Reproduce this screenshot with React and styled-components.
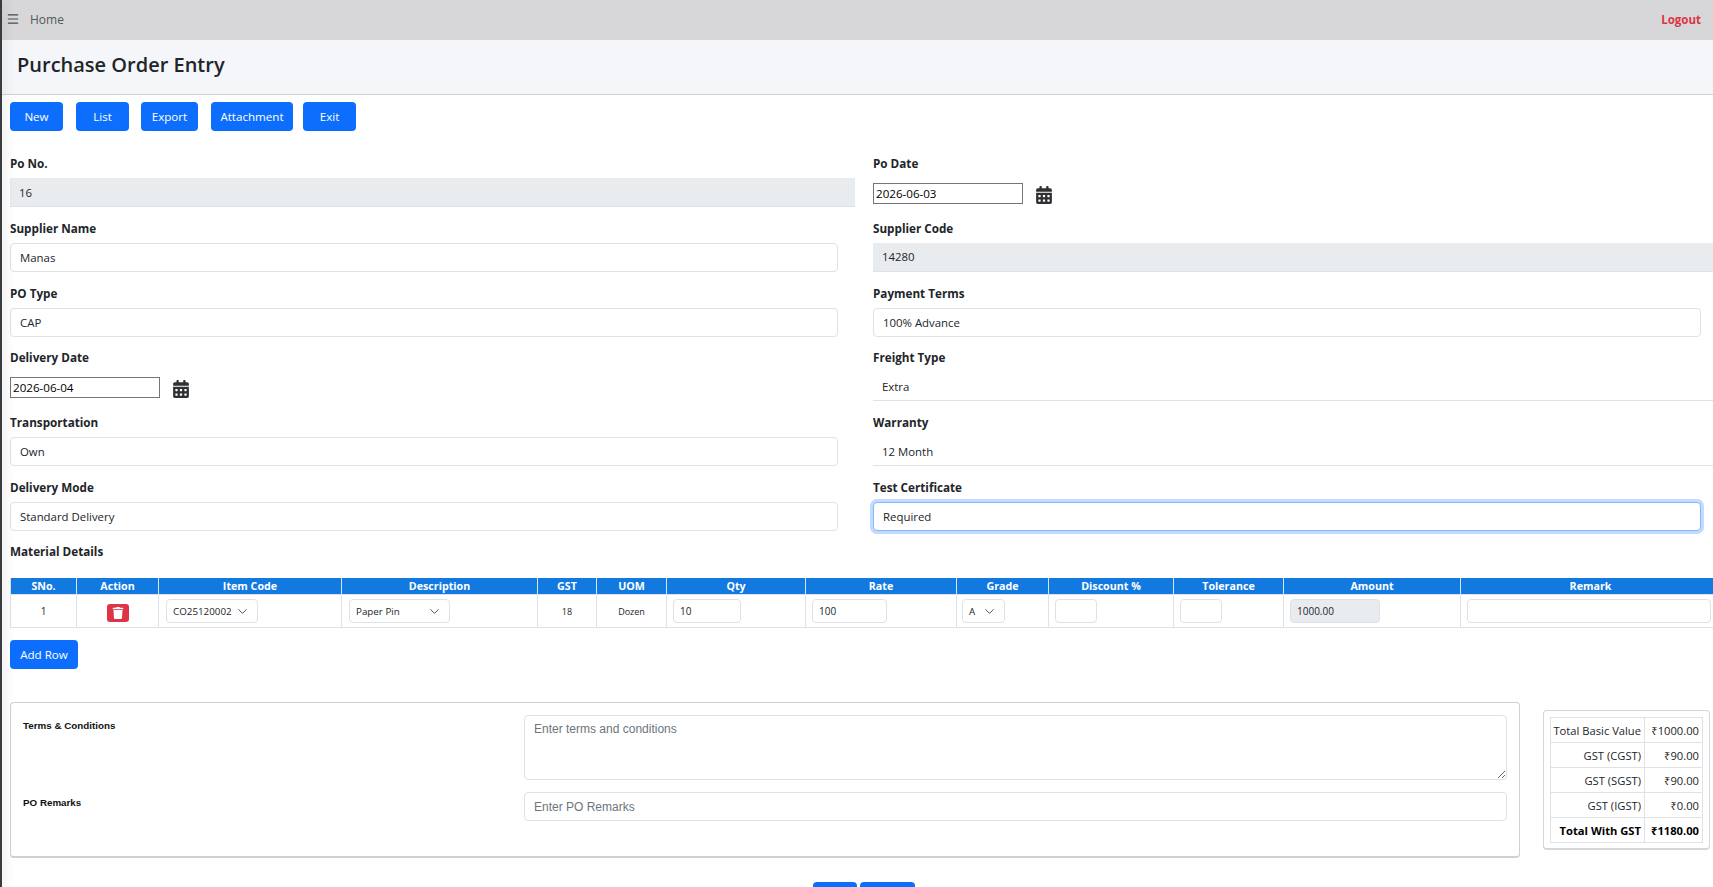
import React from 'react'
import styled, { createGlobalStyle } from 'styled-components'
import { Menu, ChevronDown } from 'lucide-react'
import { FaCalendarAlt, FaTrash } from 'react-icons/fa'

const sans = '"Open Sans", "Noto Sans", Arial, sans-serif'
const arial = '"Liberation Sans", Arial, sans-serif'

const GlobalStyle = createGlobalStyle`
  html, body {
    margin: 0;
    height: 887px;
    overflow: hidden;
    background: #fff;
  }
  * { box-sizing: border-box; }
`

const columns = [
  { title: 'SNo.', width: 66 },
  { title: 'Action', width: 82 },
  { title: 'Item Code', width: 183 },
  { title: 'Description', width: 196 },
  { title: 'GST', width: 59 },
  { title: 'UOM', width: 70 },
  { title: 'Qty', width: 139 },
  { title: 'Rate', width: 151 },
  { title: 'Grade', width: 92 },
  { title: 'Discount %', width: 125 },
  { title: 'Tolerance', width: 110 },
  { title: 'Amount', width: 177 },
  { title: 'Remark', width: 260 },
]

const totals = [
  { label: 'Total Basic Value', value: '₹1000.00' },
  { label: 'GST (CGST)', value: '₹90.00' },
  { label: 'GST (SGST)', value: '₹90.00' },
  { label: 'GST (IGST)', value: '₹0.00' },
  { label: 'Total With GST', value: '₹1180.00', strong: true },
]

const App = () => {
  return (
    <Page>
      <GlobalStyle />
      <SideEdge />
      <TopBar>
        <MenuButton><Menu size={14} strokeWidth={2} /></MenuButton>
        <HomeLink>Home</HomeLink>
        <Logout>Logout</Logout>
      </TopBar>
      <TitleBar>
        <Title>Purchase Order Entry</Title>
      </TitleBar>

      <Toolbar>
        <Button $width={53} $after={13}>New</Button>
        <Button $width={53} $after={12}>List</Button>
        <Button $width={57} $after={13}>Export</Button>
        <Button $width={82} $after={10}>Attachment</Button>
        <Button $width={53}>Exit</Button>
      </Toolbar>

      <FormGrid>
        <Field>
          <Label>Po No.</Label>
          <ReadOnlyInput readOnly value="16" />
        </Field>
        <Field>
          <Label>Po Date</Label>
          <DateRow>
            <DateInput readOnly value="2026-06-03" />
            <CalendarIcon><FaCalendarAlt /></CalendarIcon>
          </DateRow>
        </Field>

        <Field>
          <Label>Supplier Name</Label>
          <TextInput readOnly value="Manas" />
        </Field>
        <Field>
          <Label>Supplier Code</Label>
          <ReadOnlyInput readOnly value="14280" />
        </Field>

        <Field>
          <Label>PO Type</Label>
          <TextInput readOnly value="CAP" />
        </Field>
        <Field>
          <Label>Payment Terms</Label>
          <TextInput readOnly value="100% Advance" />
        </Field>

        <Field>
          <Label>Delivery Date</Label>
          <DateRow>
            <DateInput readOnly value="2026-06-04" />
            <CalendarIcon><FaCalendarAlt /></CalendarIcon>
          </DateRow>
        </Field>
        <Field>
          <Label>Freight Type</Label>
          <LineInput readOnly value="Extra" />
        </Field>

        <Field>
          <Label>Transportation</Label>
          <TextInput readOnly value="Own" />
        </Field>
        <Field>
          <Label>Warranty</Label>
          <LineInput readOnly value="12 Month" />
        </Field>

        <Field>
          <Label>Delivery Mode</Label>
          <TextInput readOnly value="Standard Delivery" />
        </Field>
        <Field>
          <Label>Test Certificate</Label>
          <TextInput $focused readOnly value="Required" />
        </Field>
      </FormGrid>

      <SectionTitle>Material Details</SectionTitle>

      <TableWrap>
        <MaterialTable>
          <colgroup>
            {columns.map(c => <col key={c.title} style={{ width: c.width }} />)}
          </colgroup>
          <thead>
            <tr>
              {columns.map(c => <HeadCell key={c.title}>{c.title}</HeadCell>)}
            </tr>
          </thead>
          <tbody>
            <tr>
              <Cell $center $big>1</Cell>
              <Cell $center>
                <DeleteButton><FaTrash /></DeleteButton>
              </Cell>
              <Cell>
                <SelectBox $width={92} $shift={1}>CO25120002<ChevronDown size={15} strokeWidth={1.5} /></SelectBox>
              </Cell>
              <Cell>
                <SelectBox $width={101} $shift={1}>Paper Pin<ChevronDown size={15} strokeWidth={1.5} /></SelectBox>
              </Cell>
              <Cell $center>18</Cell>
              <Cell $center>Dozen</Cell>
              <Cell><CellInput $width={68} readOnly value="10" /></Cell>
              <Cell><CellInput $width={75} readOnly value="100" /></Cell>
              <Cell>
                <SelectBox $width={43} $shift={-1}>A<ChevronDown size={15} strokeWidth={1.5} /></SelectBox>
              </Cell>
              <Cell><CellInput $width={42} readOnly value="" /></Cell>
              <Cell><CellInput $width={42} readOnly value="" /></Cell>
              <Cell><CellInput $width={90} $disabled readOnly value="1000.00" /></Cell>
              <Cell><CellInput $width={244} readOnly value="" /></Cell>
            </tr>
          </tbody>
        </MaterialTable>
      </TableWrap>

      <AddRow>Add Row</AddRow>

      <BottomSection>
        <TermsCard>
          <TermsRow>
            <TermsLabel>Terms &amp; Conditions</TermsLabel>
            <TermsArea placeholder="Enter terms and conditions" />
          </TermsRow>
          <TermsRow>
            <TermsLabel>PO Remarks</TermsLabel>
            <TermsInput placeholder="Enter PO Remarks" />
          </TermsRow>
        </TermsCard>
        <SummaryCard>
          <SummaryTable>
            <colgroup>
              <col style={{ width: 94 }} />
              <col />
            </colgroup>
            <tbody>
              {totals.map(t => (
                <tr key={t.label}>
                  <SummaryCell $strong={t.strong}>{t.label}</SummaryCell>
                  <SummaryCell $strong={t.strong}>{t.value}</SummaryCell>
                </tr>
              ))}
            </tbody>
          </SummaryTable>
        </SummaryCard>
      </BottomSection>

      <Footer>
        <Button $width={44} $after={3}>Save</Button>
        <Button $width={55}>Cancel</Button>
      </Footer>
    </Page>
  )
}

export default App

const Page = styled.div`
  position: relative;
  width: 1713px;
  height: 887px;
  overflow: hidden;
  font-family: ${sans};
  color: #212529;
  background: #fff;
`
const SideEdge = styled.div`
  position: absolute;
  left: 0;
  top: 0;
  bottom: 0;
  width: 2px;
  background: #3a3b3f;
  box-shadow: 2px 0 10px rgba(0, 0, 0, 0.22);
  z-index: 2;
`
const TopBar = styled.div`
  display: flex;
  align-items: center;
  height: 40px;
  padding: 0 12px 2px 6px;
  background: #d7d7d9;
  font-size: 12px;
`
const MenuButton = styled.span`
  display: flex;
  color: #4a4a4d;
`
const HomeLink = styled.span`
  margin-left: 10px;
  color: #55585c;
`
const Logout = styled.span`
  margin-left: auto;
  color: #dc3545;
  font-size: 11.5px;
  font-weight: 700;
`
const TitleBar = styled.div`
  display: flex;
  align-items: center;
  height: 55px;
  padding: 0 0 6px 17px;
  background: #f4f6fa;
  border-bottom: 1px solid #d2d2d2;
`
const Title = styled.h1`
  margin: 0;
  font-size: 20px;
  font-weight: 600;
  color: #212529;
`
const Toolbar = styled.div`
  display: flex;
  padding: 7px 0 0 10px;
`
const Button = styled.button`
  width: ${p => p.$width}px;
  height: 29px;
  margin-right: ${p => p.$after || 0}px;
  padding: 0;
  border: none;
  border-radius: 4px;
  background: #0d6efd;
  color: #fff;
  font-family: ${sans};
  font-size: 11.6px;
`
const FormGrid = styled.div`
  display: grid;
  grid-template-columns: 845px 845px;
  column-gap: 18px;
  row-gap: 10.8px;
  padding: 22px 0 0 10px;
`
const Field = styled.div`
  height: 54px;
`
const Label = styled.div`
  height: 20px;
  margin-bottom: 5px;
  font-size: 11.7px;
  line-height: 20px;
  font-weight: 700;
  color: #212529;
`
const baseInput = `
  display: block;
  height: 29px;
  padding: 0 9px;
  font-size: 11.4px;
  color: #212529;
  outline: none;
`
const ReadOnlyInput = styled.input`
  ${baseInput}
  width: 100%;
  font-family: ${sans};
  border: none;
  border-bottom: 1px solid #dee2e6;
  background: #e9ecef;
`
const TextInput = styled.input`
  ${baseInput}
  width: 828px;
  font-family: ${sans};
  background: #fff;
  border-radius: 4px;
  border: 1px solid ${p => (p.$focused ? '#86b7fe' : '#dee2e6')};
  box-shadow: ${p => (p.$focused ? '0 0 0 3px rgba(13, 110, 253, 0.25)' : 'none')};
`
const LineInput = styled.input`
  ${baseInput}
  width: 100%;
  font-family: ${sans};
  border: none;
  border-bottom: 1px solid #dee2e6;
  background: #fff;
`
const DateRow = styled.div`
  display: flex;
  align-items: center;
  gap: 12px;
  padding-top: 4px;
`
const DateInput = styled.input`
  width: 150px;
  height: 21px;
  padding: 0 2px;
  border: 1px solid #767676;
  font-family: ${sans};
  font-size: 11.6px;
  color: #000;
  outline: none;
`
const CalendarIcon = styled.span`
  display: flex;
  font-size: 18px;
  margin-top: 4px;
  color: #2f3033;
`
const SectionTitle = styled.div`
  margin: 10px 0 0 10px;
  font-size: 11.7px;
  line-height: 20px;
  font-weight: 700;
`
const TableWrap = styled.div`
  margin: 17px 0 0 10px;
`
const MaterialTable = styled.table`
  table-layout: fixed;
  width: 1710px;
  border-collapse: collapse;
`
const HeadCell = styled.th`
  height: 17px;
  padding: 0;
  background: #1279e1;
  border: 1px solid #dee2e6;
  border-top: none;
  color: #fff;
  font-family: ${sans};
  font-size: 10.7px;
  line-height: 14px;
  font-weight: 700;
  text-align: center;
`
const Cell = styled.td`
  height: 33px;
  padding: 0 0 0 ${p => (p.$center ? 0 : 6)}px;
  border: 1px solid #dee2e6;
  font-family: ${sans};
  font-size: ${p => (p.$big ? '10px' : '9px')};
  color: #212529;
  text-align: ${p => (p.$center ? 'center' : 'left')};
`
const DeleteButton = styled.span`
  display: inline-flex;
  align-items: center;
  justify-content: center;
  width: 22px;
  height: 18px;
  margin-top: 3px;
  border-radius: 3px;
  background: #dc3545;
  color: #fff;
  font-size: 12px;
`
const SelectBox = styled.div`
  display: flex;
  align-items: center;
  justify-content: space-between;
  width: ${p => p.$width}px;
  height: 24px;
  margin-left: ${p => p.$shift || 0}px;
  padding: 0 7px 0 6px;
  overflow: hidden;
  white-space: nowrap;
  border: 1px solid #dee2e6;
  border-radius: 4px;
  font-size: 9.8px;
  color: #212529;
  svg {
    flex-shrink: 0;
    color: #444;
  }
`
const CellInput = styled.input`
  display: block;
  width: ${p => p.$width}px;
  height: 24px;
  padding: 0 6px;
  border: 1px solid #dee2e6;
  border-radius: 4px;
  background: ${p => (p.$disabled ? '#e9ecef' : '#fff')};
  font-family: ${sans};
  font-size: 10px;
  color: #212529;
  outline: none;
`
const AddRow = styled.button`
  display: block;
  width: 68px;
  height: 29px;
  margin: 12px 0 0 10px;
  padding: 0;
  border: none;
  border-radius: 4px;
  background: #0d6efd;
  color: #fff;
  font-family: ${sans};
  font-size: 11.6px;
`
const BottomSection = styled.div`
  display: flex;
  align-items: flex-start;
  margin: 33px 0 0 10px;
`
const TermsCard = styled.div`
  display: flex;
  flex-direction: column;
  gap: 12px;
  width: 1510px;
  height: 156px;
  padding: 12px 12px 0 12px;
  border: 1px solid #d0d0d0;
  border-bottom-width: 2px;
  border-radius: 4px;
`
const TermsRow = styled.div`
  display: flex;
  justify-content: space-between;
`
const TermsLabel = styled.div`
  padding-top: 5px;
  font-family: ${arial};
  font-size: 9.8px;
  line-height: 12px;
  font-weight: 700;
  color: #111;
`
const TermsArea = styled.textarea`
  display: block;
  width: 983px;
  height: 65px;
  padding: 6px 9px;
  border: 1px solid #dee2e6;
  border-radius: 4px;
  font-family: ${arial};
  font-size: 12px;
  outline: none;
  &::placeholder { color: #6c757d; }
`
const TermsInput = styled.input`
  display: block;
  width: 983px;
  height: 29px;
  padding: 0 9px;
  border: 1px solid #dee2e6;
  border-radius: 4px;
  font-family: ${arial};
  font-size: 12px;
  outline: none;
  &::placeholder { color: #6c757d; }
`
const SummaryCard = styled.div`
  width: 167px;
  height: 140px;
  margin: 8px 0 0 23px;
  padding: 6px;
  border: 1px solid #d6d6d6;
  border-bottom-width: 2px;
  border-radius: 4px;
`
const SummaryTable = styled.table`
  table-layout: fixed;
  width: 100%;
  border-collapse: collapse;
`
const SummaryCell = styled.td`
  height: 25px;
  padding: 0 3px 0 2px;
  border: 1px solid #dee2e6;
  font-size: 11.2px;
  font-weight: ${p => (p.$strong ? 700 : 400)};
  color: ${p => (p.$strong ? '#000' : '#212529')};
  text-align: right;
  white-space: nowrap;
`
const Footer = styled.div`
  display: flex;
  justify-content: center;
  margin: 24px 0 0 0;
  padding-left: 15px;
`
